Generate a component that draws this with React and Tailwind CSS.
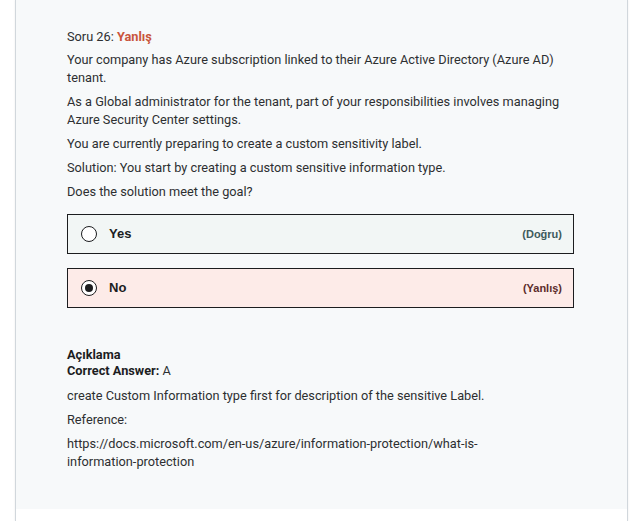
import React from 'react';

const options = [
  { label: 'Yes', note: '(Doğru)', selected: false, box: 'bg-[#f2f6f5]', noteColor: 'text-[#3e5a5c]' },
  { label: 'No', note: '(Yanlış)', selected: true, box: 'bg-[#fdebe8]', noteColor: 'text-[#5c2b2b]' },
];

const Radio = ({ checked }) => (
  <span className="flex h-[16px] w-[16px] items-center justify-center rounded-full border border-[#1c1d1f] bg-white">
    {checked && <span className="h-[8px] w-[8px] rounded-full bg-[#1c1d1f]" />}
  </span>
);

const App = () => {
  return (
    <div className="min-h-[521px] bg-white font-['Roboto',sans-serif] text-[12.75px] leading-[18px] text-[#2d2f31]">
      <div className="mx-[15px] flex h-[521px] flex-col border-x border-[#d1d7dc] shadow-[0_0_2px_rgba(0,0,0,0.08)]">
        <div className="bg-[#f7f9fa] pl-[51px] pr-[53px] pt-[28px] pb-[38px]">
          <p>
            Soru 26: <span className="font-bold text-[#c9553c]">Yanlış</span>
          </p>
          <div className="mt-[5px] space-y-[6px]">
            <p>Your company has Azure subscription linked to their Azure Active Directory (Azure AD) tenant.</p>
            <p>As a Global administrator for the tenant, part of your responsibilities involves managing Azure Security Center settings.</p>
            <p>You are currently preparing to create a custom sensitivity label.</p>
            <p>Solution: You start by creating a custom sensitive information type.</p>
            <p>Does the solution meet the goal?</p>
          </div>

          <div className="mt-[13px] space-y-[14px]">
            {options.map((o) => (
              <div
                key={o.label}
                className={`flex h-[40px] items-center border border-[#1c1d1f] pl-[13px] pr-[11px] ${o.box}`}
              >
                <Radio checked={o.selected} />
                <span className="ml-[12px] font-['Liberation_Sans',sans-serif] text-[13px] font-bold text-[#1c1d1f]">
                  {o.label}
                </span>
                <span className={`ml-auto font-['Liberation_Sans',sans-serif] text-[11px] font-bold ${o.noteColor}`}>
                  {o.note}
                </span>
              </div>
            ))}
          </div>

          <div className="mt-[39px] leading-[16px]">
            <p className="font-bold text-[#1c1d1f]">Açıklama</p>
            <p>
              <span className="font-bold text-[#1c1d1f]">Correct Answer:</span> A
            </p>
          </div>
          <div className="mt-[8px] space-y-[6px]">
            <p>create Custom Information type first for description of the sensitive Label.</p>
            <p>Reference:</p>
            <p className="pr-[80px]">https://docs.microsoft.com/en-us/azure/information-protection/what-is-information-protection</p>
          </div>
        </div>
      </div>
    </div>
  );
};

export default App;
